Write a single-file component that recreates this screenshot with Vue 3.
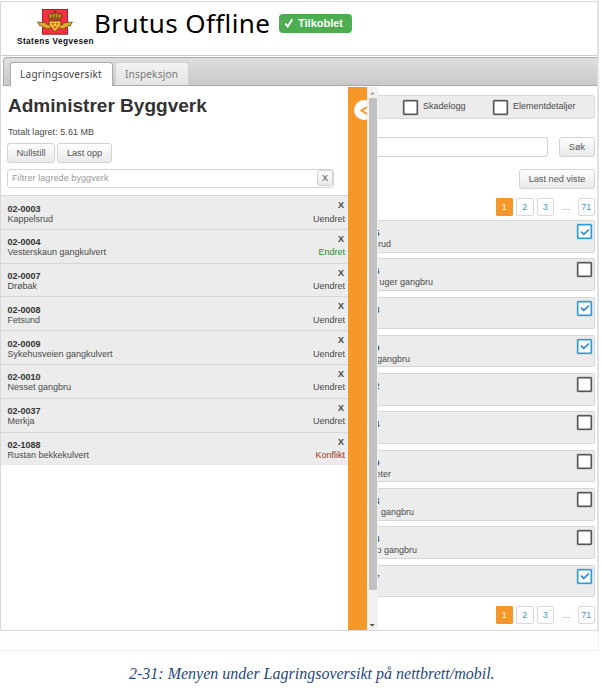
<script setup>
const saved = [
  { id: '02-0003', name: 'Kappelsrud', status: 'Uendret' },
  { id: '02-0004', name: 'Vesterskaun gangkulvert', status: 'Endret' },
  { id: '02-0007', name: 'Drøbak', status: 'Uendret' },
  { id: '02-0008', name: 'Fetsund', status: 'Uendret' },
  { id: '02-0009', name: 'Sykehusveien gangkulvert', status: 'Uendret' },
  { id: '02-0010', name: 'Nesset gangbru', status: 'Uendret' },
  { id: '02-0037', name: 'Merkja', status: 'Uendret' },
  { id: '02-1088', name: 'Rustan bekkekulvert', status: 'Konflikt' },
]
// The open menu covers the left part of each result, so only the tail of its text shows.
const results = [
  { id: '5', tail: 'rud', end: 390, checked: true },
  { id: '6', tail: 'uger gangbru', end: 432, checked: false },
  { id: '8', tail: '', end: 380, checked: true },
  { id: '9', tail: 'gangbru', end: 409, checked: true },
  { id: '2', tail: '', end: 380, checked: false },
  { id: '4', tail: '', end: 380, checked: false },
  { id: '9', tail: 'eter', end: 390, checked: false },
  { id: '4', tail: 'gangbru', end: 413, checked: false },
  { id: '3', tail: 'o gangbru', end: 416, checked: false },
  { id: '7', tail: '', end: 380, checked: true },
]
const pages = ['1', '2', '3', '...', '71']
</script>

<template>
  <div class="page">
    <div class="frame">
      <div class="window">
        <header class="header">
          <div class="brand">
            <svg class="logo" width="36" height="28" viewBox="0 0 36 28">
              <rect x="5.4" y="1.4" width="25.2" height="24.8" fill="#f5303f" stroke="#8c1d22" stroke-width=".9" />
              <path d="M.5 14 L8 14.6 L11 17 L14 15.5 L15 18 L13 20.5 L9.5 21 L8 19.5 H5.5 L4.7 17.8 H2.6 L2 16 Z M35.5 14 L28 14.6 L25 17 L22 15.5 L21 18 L23 20.5 L26.500 21 L28 19.500 H30.500 L31.300 17.800 H33.400 L34 16 Z" fill="#d9ad2b" stroke="#5e3c12" stroke-width=".7" />
              <path d="M12 13 H24 L23.500 17.500 L18 23.800 L12.500 17.500 Z" fill="#f4c832" stroke="#693d12" stroke-width=".8" />
              <path d="M14.300 15 L18 21 L21.700 15 Z" fill="#e8452f" />
              <circle cx="18" cy="16.900" r="1.700" fill="#f4cc45" />
              <path d="M12.600 12 L11.300 7 Q12.800 5 15 6 Q18 3 21 6 Q23.200 5 24.700 7 L23.400 12 Z" fill="#c99422" stroke="#552d12" stroke-width=".8" />
              <path d="M14.800 6.500 L15.400 10.500 M18 5 V10.500 M21.200 6.500 L20.600 10.500 M12.300 10.300 H23.700 M18 2.200 V5 M16.800 3.200 H19.200" stroke="#6d3515" stroke-width=".9" />
            </svg>
            <span class="brand-name">Statens Vegvesen</span>
          </div>
          <h1 class="app-name">Brutus Offline</h1>
          <span class="badge">
            <svg width="10" height="10" viewBox="0 0 10 10"><path d="M1.300 5.700 L3.700 8.500 L8.300 1.300" fill="none" stroke="#fff" stroke-width="2" /></svg>
            Tilkoblet
          </span>
        </header>
        <nav class="tabs">
          <span class="tab active">Lagringsoversikt</span>
          <span class="tab">Inspeksjon</span>
        </nav>
        <div class="body">
          <aside class="menu">
            <div class="menu-top">
              <h2>Administrer Byggverk</h2>
              <p>Totalt lagret: 5.61 MB</p>
              <div class="actions"><span class="btn">Nullstill</span><span class="btn upload">Last opp</span></div>
              <div class="filter"><span>Filtrer lagrede byggverk</span><span class="btn clear">X</span></div>
            </div>
            <div class="saved">
              <div v-for="s in saved" :key="s.id" class="saved-row">
                <div class="col"><b>{{ s.id }}</b><span>{{ s.name }}</span></div>
                <div class="col right"><b class="x">X</b><span :class="s.status.toLowerCase()">{{ s.status }}</span></div>
              </div>
            </div>
          </aside>
          <div class="handle"><div class="knob">
            <svg width="8" height="9" viewBox="0 0 8 9"><path d="M7.500 .8 L1.500 4.500 L7.500 8.200" fill="none" stroke="#f69729" stroke-width="1.900" /></svg>
          </div></div>
          <div class="scroll">
            <svg width="11" height="10" viewBox="0 0 11 10"><path d="M3.200 7.500 L5.500 5 L7.800 7.500 Z" fill="#999" /></svg>
            <div class="thumb"></div>
            <svg width="11" height="10" viewBox="0 0 11 10"><path d="M2.700 5 H7.700 L5.200 7.800 Z" fill="#505050" /></svg>
          </div>
          <main class="main">
            <div class="options">
              <span class="check"></span><span class="label damage">Skadelogg</span>
              <span class="check"></span><span class="label">Elementdetaljer</span>
            </div>
            <div class="search"><span class="input"></span><span class="btn find">Søk</span></div>
            <span class="btn download">Last ned viste</span>
            <div class="pager">
              <span v-for="p in pages" :key="p" :class="{ current: p === '1', dots: p === '...' }">{{ p }}</span>
            </div>
            <div class="results">
              <div v-for="(r, i) in results" :key="i" class="result">
                <div class="tails">
                  <b class="cut">{{ r.id }}</b>
                  <span class="cut" :style="{ width: r.end + 1 - 378 + 'px' }">{{ r.tail }}</span>
                </div>
                <span class="check" :class="{ on: r.checked }">
                  <svg v-if="r.checked" width="10" height="8" viewBox="0 0 10 8"><path d="M1 3.700 L3.800 6.300 L8.800 1.500" fill="none" stroke="#2387d2" stroke-width="1.700" /></svg>
                </span>
              </div>
            </div>
            <div class="pager bottom">
              <span v-for="p in pages" :key="p" :class="{ current: p === '1', dots: p === '...' }">{{ p }}</span>
            </div>
          </main>
        </div>
      </div>
    </div>
    <p class="caption">2-31: Menyen under Lagringsoversikt på nettbrett/mobil.</p>
  </div>
</template>

<style>
body { background: #fff; }
</style>

<style scoped>
* { box-sizing: border-box; }
.page { width: 601px; height: 697px; overflow: hidden; font: 9px/10px "Liberation Sans", Arial, sans-serif; color: #4a4a4a; white-space: nowrap; }
.frame { width: 599px; height: 651px; padding-top: 1px; background: #fefefe; border-right: 1px solid #f2f2f2; border-bottom: 1px solid #f2f2f2; }
.window { width: 599px; height: 630px; border: 1px solid #d8d8d8; border-right: 2px solid #e2e2e2; background: #fff; display: flex; flex-direction: column; }
.header { height: 54px; flex: none; display: flex; align-items: flex-start; border-bottom: 1px solid #ccc; }
.brand { width: 78px; margin-left: 16px; padding-top: 6px; display: flex; flex-direction: column; }
.logo { margin-left: 20px; }
.brand-name { font: bold 8.300px/11px "Liberation Sans", Arial, sans-serif; color: #111; letter-spacing: .4px; }
.app-name { margin: 3px 0 0 -1px; width: 184px; font: 400 26px/36px "Noto Sans", "Open Sans", sans-serif; letter-spacing: .4px; color: #000; }
.badge { margin: 12px 0 0 1px; width: 73px; height: 19px; border-radius: 4px; background: #4cae51; color: #fff; font-weight: bold; font-size: 11px; display: flex; align-items: center; gap: 4px; padding: 0 0 1px 5px; }
.tabs { height: 29px; flex: none; margin: 1px 0 0 2px; border: 1px solid #aaa; border-right: 0; border-radius: 4px 0 0 0; background: linear-gradient(#dedede, #c9c9c9); display: flex; align-items: flex-end; gap: 2px; padding-left: 6px; }
.tab { width: 74px; height: 23px; border-radius: 3px 3px 0 0; border: 1px solid #d3d3d3; border-bottom: 0; background: linear-gradient(#f2f2f2, #e4e4e4); color: #777; font: 10px/23px "Noto Sans", "Open Sans", sans-serif; letter-spacing: .2px; text-align: center; padding-right: 1px; }
.tab.active { width: 103px; height: 24px; margin-bottom: -1px; border-color: #aaa; background: #fff; color: #444; letter-spacing: .25px; }
.body { flex: 1; min-height: 0; display: flex; padding-top: 1px; }
.menu { width: 347px; flex: none; }
.menu-top { height: 108px; padding: 8px 14px 0 6px; }
h2 { margin: 0 0 0 1px; font-size: 19.050px; line-height: 22px; color: #333; }
p { margin: 0; }
.menu-top p { margin: 10px 0 0 1px; letter-spacing: .05px; }
.actions { display: flex; gap: 2px; margin-top: 6px; }
.btn { display: flex; align-items: center; justify-content: center; width: 48px; height: 20px; border: 1px solid #d2d2d2; border-radius: 3px; background: linear-gradient(#fff, #e9e9e9); color: #555; font-size: 9.200px; }
.upload { width: 55px; }
.filter { margin-top: 6px; height: 19px; border: 1px solid #d5d5d5; border-radius: 3px; display: flex; align-items: center; justify-content: space-between; padding: 0 0 1px 4px; color: #999; letter-spacing: .08px; }
.btn.clear { width: 16px; height: 16px; }
.saved-row { height: 33.800px; display: flex; justify-content: space-between; background: #ececec; border-top: 1px solid #d6d6d6; padding: 7.500px 3px 0 6.500px; }
.col { display: flex; flex-direction: column; }
.col b { color: #333; }
.col.right { align-items: flex-end; margin-top: -3.500px; }
.col.right b { padding-right: 1px; margin-bottom: 3.500px; color: #444; }
.endret { color: #2c8a2c; }
.konflikt { color: #a6301b; }
.handle { width: 19px; flex: none; background: #f69729; overflow: hidden; padding: 13px 0 0 6px; }
.knob { width: 20px; height: 20px; border-radius: 50%; background: #fff; display: flex; align-items: center; padding-left: 6px; }
.scroll { width: 11px; flex: none; background: #f1f1f1; display: flex; flex-direction: column; }
.thumb { width: 8px; height: 492px; margin: 1px 0 0 2px; background: #c1c1c1; }
.scroll svg:last-child { margin-top: auto; margin-bottom: 1px; }
.scroll svg { flex: none; }
.main { flex: 1; min-width: 0; overflow: hidden; padding: 8px 2px 0 0; display: flex; flex-direction: column; }
.options { height: 24px; flex: none; border: 1px solid #d9d9d9; border-left: 0; border-radius: 0 3px 3px 0; background: #ececec; display: flex; align-items: center; padding-left: 25px; }
.check { width: 15px; height: 15px; flex: none; border: 1px solid #555; border-radius: 1px; background: #fff; box-shadow: inset 0 0 0 .5px #555, 0 0 0 .5px #5555; display: flex; align-items: center; justify-content: center; }
.check.on { border-color: #2c9cd8; box-shadow: inset 0 0 0 .5px #2c9cd8, 0 0 0 .5px #2c9cd855; }
.label { margin: -2px 0 0 5px; font-size: 9px; }
.damage { width: 70px; }
.search { display: flex; justify-content: space-between; margin-top: 18px; }
.input { width: 170px; height: 20px; border: 1px solid #d2d2d2; border-left: 0; border-radius: 0 3px 3px 0; }
.find { width: 36px; }
.download { width: 76px; align-self: flex-end; margin-top: 12px; flex: none; }
.pager { height: 18px; flex: none; display: flex; justify-content: flex-end; gap: 3px; margin-top: 9px; }
.pager span { width: 17.500px; height: 17.500px; border: 1px solid #dadada; border-radius: 2px; display: flex; align-items: center; justify-content: center; color: #4795cf; background: #fff; }
.pager .current { color: #fff; background: #f69729; border-color: #f69729; border-radius: 1px; }
.pager .dots { border-color: transparent; color: #888; }
.results { display: flex; flex-direction: column; gap: 5.800px; margin-top: 4px; }
.result { height: 32.500px; flex: none; border: 1px solid #d6d6d6; border-left: 0; border-radius: 0 2px 2px 0; background: #ececec; display: flex; justify-content: space-between; padding: 3px 2px 0 0; }
.tails { padding-top: 4px; display: flex; flex-direction: column; }
.cut { display: flex; justify-content: flex-end; overflow: hidden; height: 11px; }
b.cut { width: 1.500px; }
.bottom { margin-top: 9px; }
.caption { margin: 12px 0 0 129px; font: italic 16px/22px "Liberation Serif", "Times New Roman", serif; color: #1f497d; }
</style>
